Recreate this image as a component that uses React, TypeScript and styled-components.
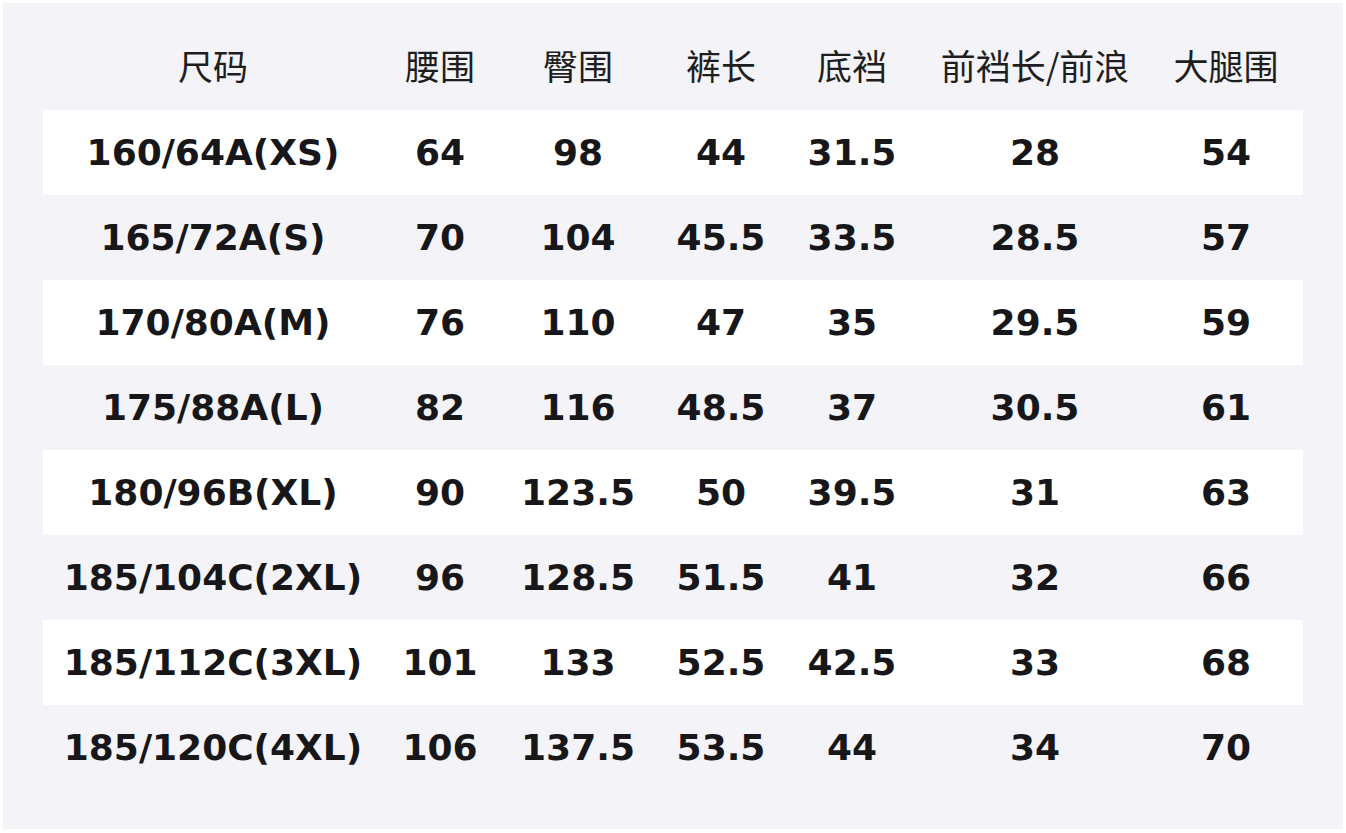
import styled, { createGlobalStyle } from "styled-components";

type SizeRow = string[];

const headers = ["尺码", "腰围", "臀围", "裤长", "底裆", "前裆长/前浪", "大腿围"];

const rows: SizeRow[] = [
  ["160/64A(XS)", "64", "98", "44", "31.5", "28", "54"],
  ["165/72A(S)", "70", "104", "45.5", "33.5", "28.5", "57"],
  ["170/80A(M)", "76", "110", "47", "35", "29.5", "59"],
  ["175/88A(L)", "82", "116", "48.5", "37", "30.5", "61"],
  ["180/96B(XL)", "90", "123.5", "50", "39.5", "31", "63"],
  ["185/104C(2XL)", "96", "128.5", "51.5", "41", "32", "66"],
  ["185/112C(3XL)", "101", "133", "52.5", "42.5", "33", "68"],
  ["185/120C(4XL)", "106", "137.5", "53.5", "44", "34", "70"],
];

const GlobalStyle = createGlobalStyle`
  html, body {
    margin: 0;
    padding: 0;
    background: #ffffff;
  }
`;

const Panel = styled.div`
  margin: 3px;
  width: 1340px;
  height: 826px;
  box-sizing: border-box;
  padding: 15px 40px 0;
  background-color: #f3f3f8;
`;

const Grid = styled.div`
  display: grid;
  grid-template-columns: 340px 114px 162px 124px 138px 228px 154px;
`;

const HeaderRow = styled.div`
  display: contents;
`;

const HeaderCell = styled.div`
  height: 92px;
  display: flex;
  align-items: center;
  justify-content: center;
  font-family: "Noto Sans CJK SC", "Noto Sans", sans-serif;
  font-size: 35px;
  color: #1e1e1e;
  white-space: nowrap;
`;

const Row = styled.div<{ $striped: boolean }>`
  grid-column: 1 / -1;
  display: grid;
  grid-template-columns: subgrid;
  height: 85px;
  background-color: ${({ $striped }) => ($striped ? "#ffffff" : "transparent")};
`;

const Cell = styled.div`
  display: flex;
  align-items: center;
  justify-content: center;
  font-family: "DejaVu Sans", sans-serif;
  font-weight: bold;
  font-size: 36px;
  color: #17171a;
  white-space: nowrap;
`;

export default function App() {
  return (
    <>
      <GlobalStyle />
      <Panel>
        <Grid>
          <HeaderRow>
            {headers.map((h) => (
              <HeaderCell key={h}>{h}</HeaderCell>
            ))}
          </HeaderRow>
          {rows.map((r, i) => (
            <Row key={r[0]} $striped={i % 2 === 0}>
              {r.map((v, j) => (
                <Cell key={j}>{v}</Cell>
              ))}
            </Row>
          ))}
        </Grid>
      </Panel>
    </>
  );
}
